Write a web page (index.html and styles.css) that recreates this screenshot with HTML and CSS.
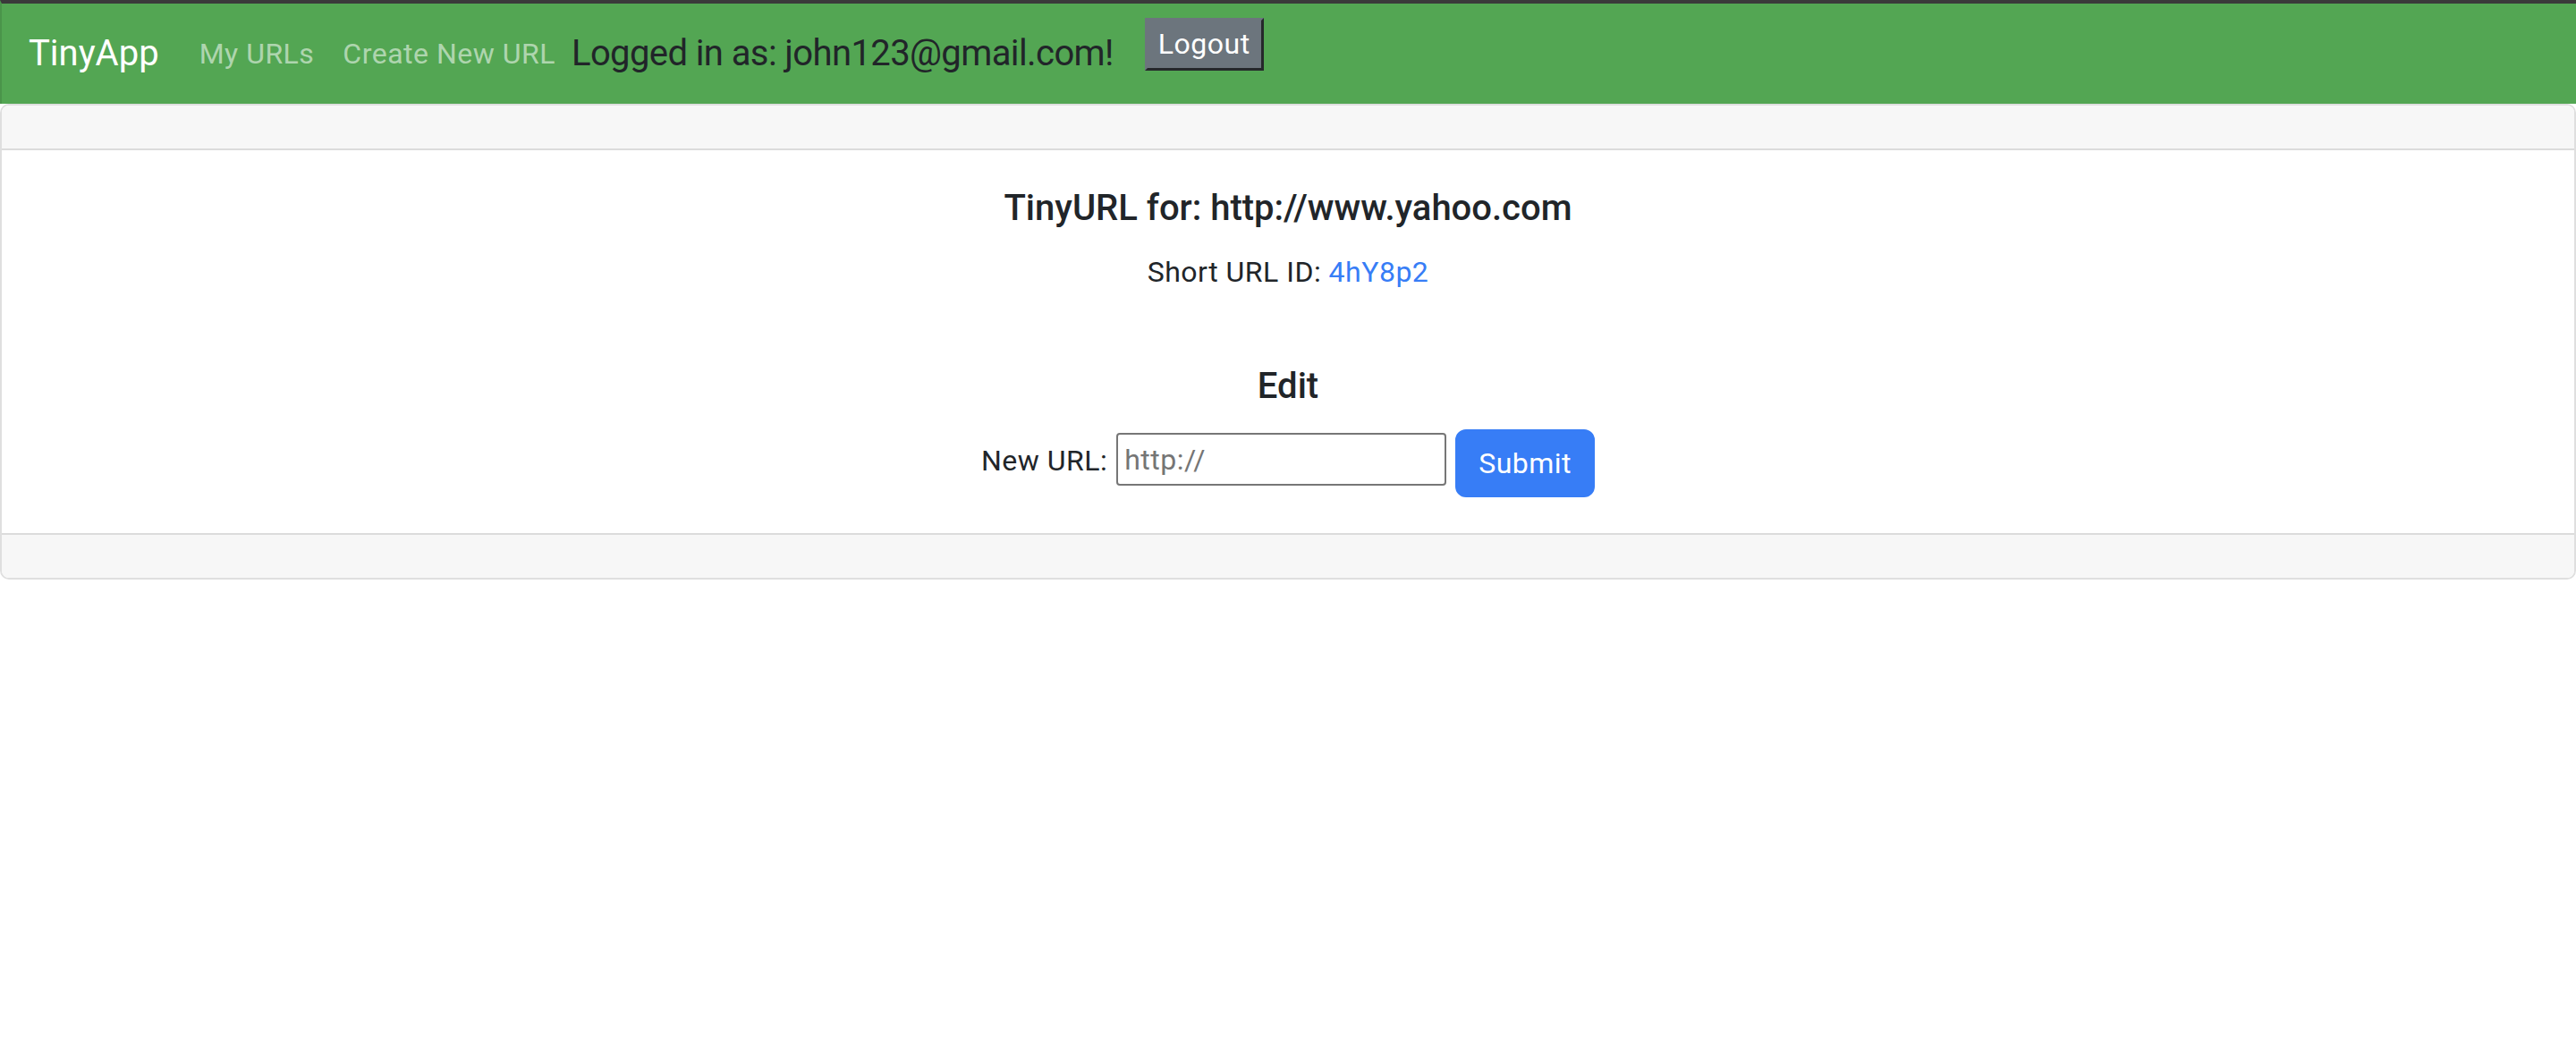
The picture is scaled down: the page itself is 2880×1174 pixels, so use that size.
FILE: index.html
```html
<!DOCTYPE html>
<html lang="en">
<head>
<meta charset="utf-8">
<title>TinyApp</title>
<link rel="stylesheet" href="styles.css">
</head>
<body>
<nav class="navbar">
  <a class="brand" href="#">TinyApp</a>
  <div class="nav-links">
    <a class="nav-link" href="#">My URLs</a>
    <a class="nav-link" href="#">Create New URL</a>
  </div>
  <span class="logged">Logged in as: john123@gmail.com!</span>
  <form class="logout-form">
    <button class="logout" type="button">Logout</button>
  </form>
</nav>
<div class="card">
  <div class="card-header"></div>
  <div class="card-body">
    <h5 class="title">TinyURL for: http://www.yahoo.com</h5>
    <p class="short">Short URL ID: <a href="#" class="link">4hY8p2</a></p>
    <h5 class="edit-title">Edit</h5>
    <form class="edit-form">
      <label class="label" for="newurl">New URL:</label>
      <input class="url-input" id="newurl" type="text" placeholder="http://">
      <button class="submit" type="button">Submit</button>
    </form>
  </div>
  <div class="card-footer"></div>
</div>
</body>
</html>
```
FILE: styles.css
```css
* { box-sizing: border-box; }
html, body { margin: 0; padding: 0; }
body {
  font-family: Roboto, "Noto Sans", "Liberation Sans", sans-serif;
  font-size: 32px;
  line-height: 1.5;
  letter-spacing: 0.5px;
  color: #212529;
  background: #ffffff;
}
.navbar {
  display: flex;
  align-items: center;
  height: 116px;
  background: #53a653;
  border-top: 4px solid #3a3a3a;
  border-left: 2px solid #4a944a;
  padding: 0 30px;
}
.brand {
  font-size: 40px;
  line-height: 60px;
  letter-spacing: 0;
  color: #ffffff;
  text-decoration: none;
  margin-right: 29px;
}
.nav-links { display: flex; }
.nav-link {
  padding: 0 16px;
  color: rgba(255, 255, 255, 0.55);
  text-decoration: none;
  line-height: 48px;
}
.logged {
  font-size: 40px;
  line-height: 60px;
  letter-spacing: -0.6px;
  color: #212529;
  margin-left: 2px;
}
.logout-form {
  align-self: flex-start;
  margin: 16px 0 0 35px;
}
.logout {
  font-family: inherit;
  font-size: 32px;
  letter-spacing: 0.5px;
  line-height: 39px;
  height: 59px;
  padding: 7px 12px;
  color: #ffffff;
  background: #6c757d;
  border-style: solid;
  border-width: 3px;
  border-color: #6c757d #25282b #25282b #6c757d;
}
.card {
  border: 2px solid #dfdfdf;
  border-radius: 10px;
  overflow: hidden;
}
.card-header {
  height: 50px;
  background: #f7f7f7;
  border-bottom: 2px solid #dcdcdc;
}
.card-footer {
  height: 50px;
  background: #f7f7f7;
  border-top: 2px solid #dcdcdc;
}
.card-body {
  padding: 41px 32px 40px;
  text-align: center;
}
.title, .edit-title {
  font-size: 40px;
  font-weight: 500;
  line-height: 48px;
  letter-spacing: 0;
  margin: 0;
}
.short {
  margin: 23px 0 0;
  line-height: 48px;
}
.link { color: #377df6; text-decoration: none; }
.edit-title { margin-top: 80px; }
.edit-form {
  display: flex;
  justify-content: center;
  align-items: flex-start;
  margin-top: 24px;
}
.label {
  line-height: 48px;
  margin-top: 11px;
  margin-right: 10px;
}
.url-input {
  width: 369px;
  height: 59px;
  margin-top: 4px;
  margin-right: 10px;
  padding: 0 7px;
  border: 2px solid #767676;
  border-radius: 4px;
  font-family: inherit;
  font-size: 32px;
  letter-spacing: 0.5px;
  color: #212529;
}
.url-input::placeholder { color: #757575; }
.submit {
  height: 76px;
  padding: 12px 24px;
  font-family: inherit;
  font-size: 32px;
  letter-spacing: 0.5px;
  line-height: 48px;
  color: #ffffff;
  background: #377df6;
  border: 2px solid #377df6;
  border-radius: 12px;
}
```
